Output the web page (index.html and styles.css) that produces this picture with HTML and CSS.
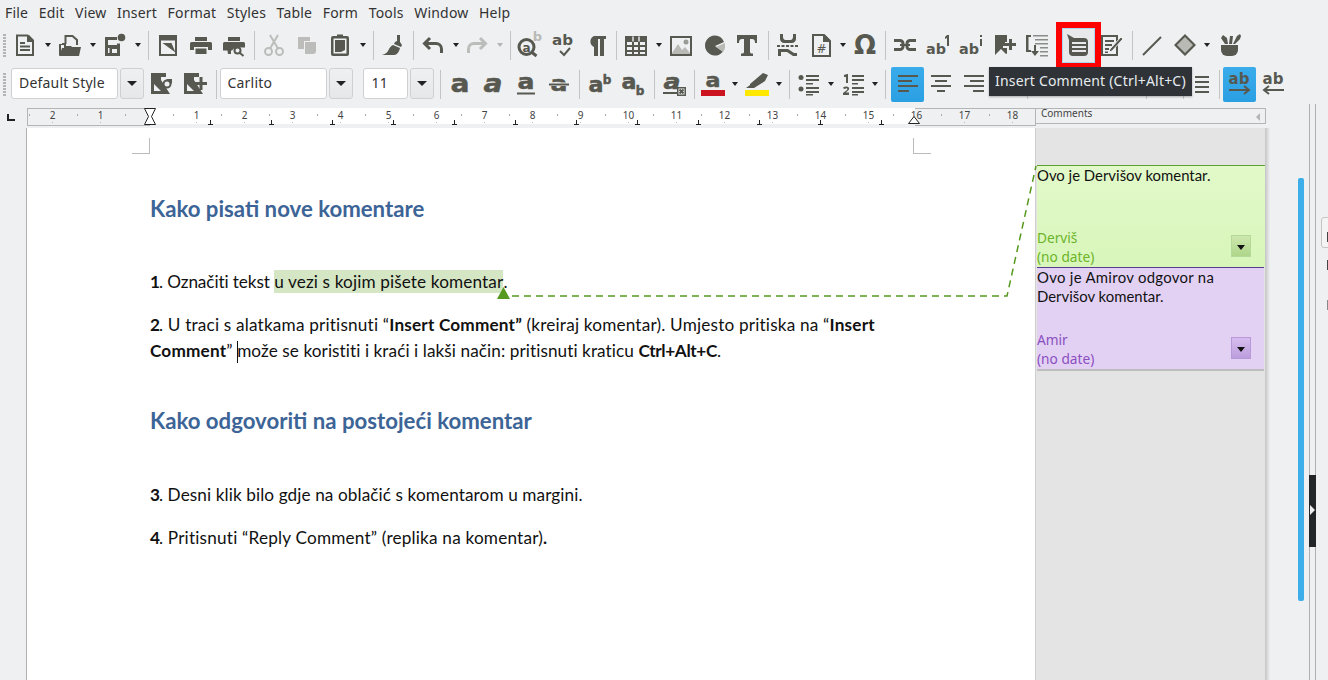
FILE: index.html
```html
<!DOCTYPE html>
<html lang="hr">
<head>
<meta charset="utf-8">
<title>Insert Comment</title>
<link rel="stylesheet" href="styles.css">
</head>
<body>
<div class="app">
  <nav class="menubar">
    <span>File</span><span>Edit</span><span>View</span><span>Insert</span><span>Format</span><span>Styles</span><span>Table</span><span>Form</span><span>Tools</span><span>Window</span><span>Help</span>
  </nav>

  <div class="toolbar tb1">
    <i class="grip"></i>
    <b class="b"><svg viewBox="0 0 24 24"><path class="st" d="M4 2.500h10.500l5.500 5.500V22H4z"/><path d="M14 2h2l5 5v2h-7zM7 9h5v2H7zM7 12.500h10v2H7zM7 16h10v2H7z"/></svg></b><b class="d"></b>
    <b class="b"><svg viewBox="0 0 24 24"><path d="M1 11h3v-1h4v3h5l1 1h9l-2 9H2a1 1 0 0 1-1-1zM3 12v6l1-3h2v-3z"/><path class="st" d="M7.500 11V3h7l4.500 4v5"/></svg></b><b class="d"></b>
    <b class="b"><svg viewBox="0 0 24 24"><path d="M2 4h12v3H5v5h9v-1.500h3V23H2zM5 15v5h1.500v-5zM9 16v4h5v-4z"/><circle cx="18.500" cy="4.500" r="3.800"/></svg></b><b class="d"></b>
    <i class="s"></i>
    <b class="b"><svg viewBox="0 0 24 24"><path class="st" d="M4 3h16v19H4z"/><path d="M3 3h18v4.500H3zM6.500 10h9l4 9.500z"/><path class="wh" d="M8 12l8 8H8z"/></svg></b>
    <b class="b"><svg viewBox="0 0 24 24"><path d="M6 4h12v4H6zM2.500 9h19a1.500 1.500 0 0 1 1.500 1.500V17h-4v-3H5v3H1v-6.500A1.500 1.500 0 0 1 2.500 9zM6.500 15.500h11V21h-11z"/></svg></b>
    <b class="b"><svg viewBox="0 0 24 24"><path d="M6 4h12v4H6zM2.500 9h19a1.500 1.500 0 0 1 1.500 1.500v4h-8a6 6 0 0 0-5 3H1v-7A1.500 1.500 0 0 1 2.500 9z"/><path d="M5 15h4v6H6z"/><circle class="st" cx="15.500" cy="17.500" r="3"/><path class="st" d="M18 20l3.500 3"/></svg></b>
    <i class="s"></i>
    <b class="b off"><svg viewBox="0 0 24 24"><circle class="st" cx="6.500" cy="18.500" r="3.500"/><circle class="st" cx="17.500" cy="18.500" r="3.500"/><path class="st" d="M8 15.500L16 2M16 15.500L8 2"/></svg></b>
    <b class="b off"><svg viewBox="0 0 24 24"><path d="M3 4h12v4H9v8H3z"/><path d="M10 9h11v9a3 3 0 0 1-3 3h-8z"/></svg></b>
    <b class="b"><svg viewBox="0 0 24 24"><path d="M5 3h4V1.500h6V3h4a2 2 0 0 1 2 2v16a2 2 0 0 1-2 2H5a2 2 0 0 1-2-2V5a2 2 0 0 1 2-2zM5.500 5.500v15h13v-15z"/><path d="M7 7h10v10l-4 2H7z"/></svg></b><b class="d"></b>
    <i class="s"></i>
    <b class="b"><svg viewBox="0 0 24 24"><path d="M16 2h3v7l2 3-1 2-7-3 1-2 2-1z"/><path d="M12 12l7 3c-1 4-3 7-6 7H1c4-1 6-3 7-6 1-2 2-3 4-4z"/></svg></b>
    <i class="s"></i>
    <b class="b"><svg viewBox="0 0 24 24"><path class="st3" d="M9 5L3.500 10.500 9 16M4 10.500h11a5.500 5.500 0 0 1 5.500 5.500v4"/></svg></b><b class="d"></b>
    <b class="b off n1"><svg viewBox="0 0 24 24"><path class="st3" d="M15 5l5.500 5.500L15 16M20 10.500H9A5.500 5.500 0 0 0 3.500 16v4"/></svg></b><b class="d dim"></b>
    <i class="s"></i>
    <b class="b"><svg viewBox="0 0 24 24"><text class="g fade" x="19.500" y="8" font-size="13">b</text><circle class="st3" cx="8.500" cy="14" r="7.500"/><text class="g" x="8.500" y="18.500" font-size="12">a</text><path class="st3" d="M14 19.500l4.500 3.500"/></svg></b>
    <b class="b"><svg viewBox="0 0 24 24"><text class="g t" x="1" y="12" font-size="14" textLength="21" lengthAdjust="spacingAndGlyphs">ab</text><path class="st" d="M9 18l4 4 6-7"/></svg></b>
    <b class="b"><svg viewBox="0 0 24 24"><path d="M10 3h12v3h-2v17h-4V6h-2v17h-4v-9a6 6 0 0 1 0-11z"/></svg></b>
    <i class="s"></i>
    <b class="b"><svg viewBox="0 0 24 24"><path d="M1 3h22v20H1zM3 9v3h5V9zm7 0v3h4V9zm6 0v3h5V9zM3 14v3h5v-3zm7 0v3h4v-3zm6 0v3h5v-3zM3 19v2h5v-2zm7 0v2h4v-2zm6 0v2h5v-2z"/><path class="wh" d="M8.300 3.500h1.400v5h-1.400zM14.300 3.500h1.400v5h-1.400z"/></svg></b><b class="d"></b>
    <b class="b"><svg viewBox="0 0 24 24"><path d="M1 3h22v20H1zM3 5v16h18V5z"/><circle cx="17" cy="9" r="2.500" class="gy2"/><path d="M3 20l6-9 4 6 3-3 5 6v1H3z" class="gy"/></svg></b>
    <b class="b"><svg viewBox="0 0 24 24"><path d="M13 2.500a10 10 0 1 0 8 16L13 13l9-4a10 10 0 0 0-9-6.500z"/><path class="gy" d="M14 14l9-4v5a9 9 0 0 1-2 4z"/></svg></b>
    <b class="b"><svg viewBox="0 0 24 24"><path d="M2 2h20v8h-2c0-3-1-4-3-4h-2v13c0 1 1 1.500 3 1.500V23H6v-2.500c2 0 3-.5 3-1.500V6H7c-2 0-3 1-3 4H2z"/></svg></b>
    <i class="s"></i>
    <b class="b"><svg viewBox="0 0 24 24"><path d="M4 1h3v3c0 1.500 1 3 2.500 3h5c1.500 0 2.500-1.500 2.500-3V1h3v5c0 2-2 4-4 4H8c-2 0-4-2-4-4zM1 12h3v2H1zm4.500 0h3v2h-3zm4.500 0h3v2h-3zm4.500 0h3v2h-3zm4.500 0h3v2h-3zM2 16h10l6 4h3v3h-4l-6-4H5v4H2z"/></svg></b>
    <b class="b"><svg viewBox="0 0 24 24"><path class="st" d="M4 2h11l6 6v15H4z"/><path d="M14 2h2l5 5v2h-7z"/><text class="h" x="12.500" y="20" font-size="12">#</text></svg></b><b class="d"></b>
    <b class="b n1"><svg viewBox="0 0 24 24"><text class="o" x="12" y="21" font-size="26">Ω</text></svg></b>
    <i class="s"></i>
    <b class="b"><svg viewBox="0 0 24 24"><path class="st3" d="M1 7.500h6a3 3 0 0 1 3 3v3a3 3 0 0 1-3 3H1M23 7.500h-6a3 3 0 0 0-3 3v3a3 3 0 0 0 3 3h6"/><path d="M7 11h10v2H7z"/></svg></b>
    <b class="b"><svg viewBox="0 0 24 24"><text class="g t" x="0" y="21" font-size="14" textLength="20" lengthAdjust="spacingAndGlyphs">ab</text><path d="M21 2h2v11h-2V5l-2 1V4z"/></svg></b>
    <b class="b"><svg viewBox="0 0 24 24"><text class="g t" x="0" y="21" font-size="14" textLength="20" lengthAdjust="spacingAndGlyphs">ab</text><path d="M21 2h2v2h-2zM21 6h2v7h-2z"/></svg></b>
    <b class="b"><svg viewBox="0 0 24 24"><path d="M3 2h12v7h-2v4h-2v2h4v5.500l-1 .5-5-5-6 6z"/><path d="M17 6h3v4h4v3h-4v4h-3v-4h-4v-3h4z"/></svg></b>
    <b class="b"><svg viewBox="0 0 24 24"><path d="M1 2h5v2H3.500v13H6v2H1z"/><path class="gy3" d="M8 2h15v1.500H8zM10 6h13v1.500H10zM10 10h13v1.500H10zM15 14h8v1.500h-8zM15 18h8v1.500h-8zM15 22h8v1.500h-8z"/><path d="M9 12h2v6h3l-4 5-4-5h3z"/></svg></b>
    <b class="b hot"><svg viewBox="0 0 24 24"><path d="M1 0l7 4h10a4 4 0 0 1 4 4v10a4 4 0 0 1-4 4H7a4 4 0 0 1-4-4V6z"/><path class="hl" d="M6 8h14v2H6zM6 12h14v2H6zM6 16h14v2H6z"/></svg></b>
    <b class="b"><svg viewBox="0 0 24 24"><path class="st" d="M3 3h15v19H3z"/><path d="M6 7h9v2H6zM6 11h7v2H6zM6 15h4v2H6zM6 18.500h3v1.500H6z"/><path d="M22 4l2 2-11 12-3 1 1-3z" class="pen"/></svg></b>
    <i class="s"></i>
    <b class="b"><svg viewBox="0 0 24 24"><path class="st" d="M3 22L21 4"/></svg></b>
    <b class="b"><svg viewBox="0 0 24 24"><path class="gy" d="M12 3l9 9-9 9-9-9z"/><path d="M12 1l11 11-11 11L1 12zM4 12l8 8 8-8-8-8z"/></svg></b><b class="d"></b>
    <b class="b"><svg viewBox="0 0 24 24"><path d="M3 12h17v5a6 6 0 0 1-6 6H9a6 6 0 0 1-6-6z"/><path d="M3 5l2-3 4 3 1 6H7zM11 11l1-8h3l-1 8zM15 11l4-8 3-2 1 2-1 3-5 5z"/></svg></b>
  </div>

  <div class="toolbar tb2">
    <i class="grip"></i>
    <span class="combo c-style">Default Style</span><span class="arrow"></span>
    <b class="b"><svg viewBox="-2 0 24 24"><path fill-rule="evenodd" d="M0 1h15v4h-5v3l9 14H0zM3 12v7h7z"/><circle class="st" cx="16" cy="12" r="3.500"/><path d="M15 7h6v5z"/></svg></b>
    <b class="b"><svg viewBox="-2 0 24 24"><path fill-rule="evenodd" d="M0 1h15v4h-5v3l9 14H0zM3 12v7h7z"/><path d="M15.500 5h3v5H23v3h-4.500v5h-3v-5H11v-3h4.500z"/></svg></b>
    <i class="s m1"></i>
    <span class="combo c-font">Carlito</span><span class="arrow"></span>
    <span class="combo c-size">11</span><span class="arrow"></span>
    <i class="s m1"></i>
    <b class="b"><svg viewBox="0 0 24 24"><text class="a" x="12" y="20" font-size="25" textLength="19" lengthAdjust="spacingAndGlyphs">a</text></svg></b>
    <b class="b"><svg viewBox="0 0 24 24"><text class="a" x="12" y="20" font-size="25" font-style="italic" textLength="19" lengthAdjust="spacingAndGlyphs">a</text></svg></b>
    <b class="b"><svg viewBox="0 0 24 24"><text class="a" x="12" y="17" font-size="22" textLength="17" lengthAdjust="spacingAndGlyphs">a</text><path d="M3 20.500h18v2H3z"/></svg></b>
    <b class="b"><svg viewBox="0 0 24 24"><text class="a" x="12" y="19" font-size="22" textLength="17" lengthAdjust="spacingAndGlyphs">a</text><path class="bgl" d="M1 10.500h22v3.500H1z"/><path d="M2 11.500h20v2H2z"/></svg></b>
    <i class="s"></i>
    <b class="b"><svg viewBox="0 0 24 24"><text class="a" x="9" y="20" font-size="21" textLength="15" lengthAdjust="spacingAndGlyphs">a</text><text class="a" x="20" y="12" font-size="12">b</text></svg></b>
    <b class="b"><svg viewBox="0 0 24 24"><text class="a" x="9" y="17" font-size="21" textLength="15" lengthAdjust="spacingAndGlyphs">a</text><text class="a" x="20" y="23" font-size="12">b</text></svg></b>
    <i class="s m2"></i>
    <b class="b"><svg viewBox="0 0 24 24"><text class="a" x="10" y="17" font-size="22" font-style="italic" textLength="17" lengthAdjust="spacingAndGlyphs">a</text><path d="M1 20h14v2H1z"/><path d="M15 15h9v9h-9zM16.500 16.500v6h6v-6z"/><path class="st" d="M17.500 17.500l4 4M21.500 17.500l-4 4"/></svg></b>
    <i class="s m5"></i>
    <b class="b"><svg viewBox="0 0 24 24"><text class="a" x="12" y="15" font-size="19" textLength="15" lengthAdjust="spacingAndGlyphs">a</text><path d="M0 18h24v6H0z" class="red"/></svg></b><b class="d"></b>
    <b class="b"><svg viewBox="0 0 24 24"><path d="M5 12L18 1l5 2-3 6-11 7H4l-3 0 4-3z"/><path d="M0 18h24v6H0z" class="yel"/></svg></b><b class="d"></b>
    <i class="s"></i>
    <b class="b"><svg viewBox="0 0 24 24"><circle cx="4" cy="5.500" r="2.500"/><circle cx="4" cy="17" r="2.500"/><path d="M9 3h13v2H9zM9 7h13v2H9zM9 11h7v1.500H9zM9 15h13v2H9zM9 19h13v2H9zM9 22h7v1.500H9z"/></svg></b><b class="d"></b>
    <b class="b"><svg viewBox="0 0 24 24"><path d="M3 3l3-1h1v9H5V5H3zM2 23v-2l4-3c1-1 0-2-1-1.500L3 17l-1-1.500c3-2 7-1 6 2l-3 3h3v2.500z"/><path d="M11 3h12v2H11zM11 7h12v2H11zM11 11h6v1.500h-6zM11 15h12v2H11zM11 19h12v2H11zM11 22h6v1.500h-6z"/></svg></b><b class="d"></b>
    <i class="s m3"></i>
    <b class="b on"><svg viewBox="0 0 24 24"><path d="M2 3h20v2H2zM2 8h14v2H2zM2 13h20v2H2zM2 18h11v2H2z"/></svg></b>
    <b class="b"><svg viewBox="0 0 24 24"><path d="M2 3h20v2H2zM6 8h12v2H6zM2 13h20v2H2zM8 18h8v2H8z"/></svg></b>
    <b class="b"><svg viewBox="0 0 24 24"><path d="M2 3h20v2H2zM8 8h14v2H8zM2 13h20v2H2zM11 18h11v2H11z"/></svg></b>
    <b class="b"><svg viewBox="0 0 24 24"><path d="M2 3h20v2H2zM2 8h20v2H2zM2 13h20v2H2zM2 18h20v2H2z"/></svg></b>
    <i class="s"></i>
    <b class="b"></b><b class="b"></b><b class="b"></b>
    <i class="s m4"></i>
    <b class="b"></b>
    <i class="s m6"></i>
    <b class="b"><svg viewBox="0 0 24 24"><path d="M4 4h14v2H4zM4 9h14v2H4zM4 14h14v2H4zM4 19h14v2H4z"/></svg></b>
    <i class="s m7"></i>
    <b class="b on"><svg viewBox="0 0 24 24"><text class="g" x="11" y="12" font-size="15">ab</text><path class="st" d="M1 18h19M16 14l5 4-5 4"/></svg></b>
    <b class="b"><svg viewBox="0 0 24 24"><text class="g" x="12" y="12" font-size="15">ab</text><path class="st" d="M23 18H4M8 14l-5 4 5 4"/></svg></b>
  </div>

  <div class="rulerbar">
    <span class="corner"></span>
    <div class="ruler">
      <span class="rcell">2</span><span class="rcell">1</span><span class="rcell"></span><span class="rcell">1</span><span class="rcell">2</span><span class="rcell">3</span><span class="rcell">4</span><span class="rcell">5</span><span class="rcell">6</span><span class="rcell">7</span><span class="rcell">8</span><span class="rcell">9</span><span class="rcell">10</span><span class="rcell">11</span><span class="rcell">12</span><span class="rcell">13</span><span class="rcell">14</span><span class="rcell">15</span><span class="rcell">16</span><span class="rcell">17</span><span class="rcell">18</span>
      <span class="tabs"></span>
      <svg class="hourglass" viewBox="0 0 12 17"><path d="M.5.500h11L7.500 8.500l4 8H.5l4-8z"/></svg>
      <svg class="rindent" viewBox="0 0 12 8"><path d="M.5 7.500L6 .5l5.500 7z"/></svg>
    </div>
    <div class="rcomments"><span>Comments</span><i class="rtri"></i></div>
  </div>

  <main class="workspace">
    <section class="page">
      <span class="crop crop-l"></span><span class="crop crop-r"></span>
      <h2>Kako pisati nove komentare</h2>
      <p class="p1"><strong>1</strong>. Označiti tekst <span class="mark">u vezi s kojim pišete komentar</span>.</p>
      <p class="p2"><strong>2</strong>. U traci s alatkama pritisnuti “<strong>Insert Comment”</strong> (kreiraj komentar). Umjesto pritiska na “<strong>Insert<br>Comment</strong>” <span class="line2"><i class="caret"></i>može se koristiti i kraći i lakši način: pritisnuti kraticu <strong class="keys">Ctrl+Alt+C</strong>.</span></p>
      <h2 class="h2b">Kako odgovoriti na postojeći komentar</h2>
      <p class="p3"><strong>3</strong>. Desni klik bilo gdje na oblačić s komentarom u margini.</p>
      <p class="p4"><strong>4</strong>. Pritisnuti “Reply Comment” (replika na komentar)<strong>.</strong></p>
    </section>
    <aside class="comments">
      <article class="note green">
        <div class="ntext">Ovo je Dervišov komentar.</div>
        <div class="nfoot"><div class="nmeta">Derviš<br>(no date)</div><span class="nbtn"></span></div>
      </article>
      <article class="note purple">
        <div class="ntext"><span class="wide">Ovo je Amirov odgovor na</span><br>Dervišov komentar.</div>
        <div class="nfoot"><div class="nmeta">Amir<br>(no date)</div><span class="nbtn"></span></div>
      </article>
    </aside>
    <div class="shadow"></div>
    <div class="scroll"><span class="thumb"></span></div>
    <div class="deck"><span class="handle"></span></div>
    <div class="sidepanel"><span class="peek"></span><span class="peek2"></span><span class="peek3"></span><span class="peek4"></span></div>
    <svg class="anchor" viewBox="0 0 1328 552" aria-hidden="true">
      <path class="dash" d="M512 168H1007L1036 38"/>
      <path class="tri" d="M497 171l6.500-12 6.500 12z"/>
    </svg>
  </main>

  <div class="tooltip">Insert Comment (Ctrl+Alt+C)</div>
</div>
</body>
</html>
```

FILE: styles.css
```css
* { box-sizing: border-box; }
html, body { margin: 0; height: 100%; overflow: hidden; }
body { background: #eff0f2; font-family: "Noto Sans", sans-serif; color: #2f3337; }
.app { position: relative; width: 1328px; height: 680px; overflow: hidden; display: flex; flex-direction: column; }

.menubar { display: flex; height: 25px; padding-left: 5px; gap: 10.500px; font-size: 14px; letter-spacing: .2px; line-height: 25px; color: #333; }

.toolbar { display: flex; align-items: center; }
.tb1 { height: 40px; }
.tb2 { height: 38px; }
.grip { width: 3px; height: 23px; margin: 0 3px 0 3px; background: repeating-linear-gradient(#b5b5b5 0 2px, transparent 2px 3px); flex: none; }
.tb1 .grip { margin-right: 2.500px; }
.tb2 .grip { margin-right: 5px; }

.b { flex: none; width: 33px; height: 36px; display: flex; align-items: center; justify-content: center; color: #575850; font-weight: 400; }
.b svg { width: 24px; height: 24px; fill: currentColor; display: block; overflow: visible; }
.off { color: #bcbdba; }
.n1 { margin-left: -1px; }
.d { flex: none; width: 12px; height: 36px; display: flex; align-items: center; justify-content: center; }
.tb2 .d { width: 11px; }
.d::after { content: ""; border: 3.500px solid transparent; border-top: 4px solid #222; border-bottom: 0; }
.dim::after { border-top-color: #b5b5b5; }
.s { flex: none; width: 6px; height: 29px; margin-left: 1.500px; display: flex; justify-content: center; }
.s::after { content: ""; width: 1px; background: #c3c4c4; }
.m1 { margin-left: 3.500px; }
.m2 { margin-left: 2.500px; }
.m3 { margin-left: 2.500px; margin-right: 2.500px; }
.m4 { margin-left: 13.500px; }
.m5 { margin-right: -1px; }
.m6 { margin-left: -2px; }
.m7 { margin-left: -3px; margin-right: 1px; }

.st { fill: none; stroke: currentColor; stroke-width: 2; }
.st3 { fill: none; stroke: currentColor; stroke-width: 3; }
.wh { fill: #eff0f2; }
.gy { fill: #b9bab6; }
.gy2 { fill: #9a9b96; }
.gy3 { fill: #8b8c87; }
.hl { fill: #e8e9eb; }
.bgl { fill: #eff0f2; }
.pen { stroke: #eff0f2; stroke-width: 1; }
.red { fill: #cc1420; }
.yel { fill: #ffe800; }
.g { font-family: "DejaVu Sans", sans-serif; font-weight: 700; text-anchor: middle; fill: currentColor; }
.g.t { text-anchor: start; }
.g.fade { fill: #b9bab6; }
.a { font-family: "DejaVu Sans", sans-serif; font-weight: 700; text-anchor: middle; fill: currentColor; stroke: currentColor; stroke-width: .5; }
.h { font-family: "DejaVu Sans", sans-serif; text-anchor: middle; fill: currentColor; }
.o { font-family: "DejaVu Sans", sans-serif; font-weight: 700; text-anchor: middle; fill: currentColor; }

.combo { flex: none; height: 31px; margin-bottom: 1px; background: #fff; border: 1px solid #cfd0d1; border-radius: 3px; font-size: 14px; letter-spacing: .2px; line-height: 28px; padding-left: 7px; color: #333; }
.c-style { width: 107px; }
.c-font { width: 107px; }
.c-size { width: 45px; padding-left: 8px; margin-left: 10px; }
.arrow { flex: none; width: 24px; height: 31px; margin: 0 0 1px 2px; background: linear-gradient(#eff0f2, #e6e7e9); border: 1px solid #cfd0d1; border-radius: 3px; display: flex; align-items: center; justify-content: center; }
.arrow::after { content: ""; border: 5px solid transparent; border-top: 5px solid #222; border-bottom: 0; }
.on { background: linear-gradient(#3aaceb, #2a9fe2); border-radius: 2px; height: 35px; }

.rulerbar { display: flex; height: 20px; margin-top: 5px; flex: none; }
.corner { flex: none; width: 27px; position: relative; }
.corner::after { content: ""; position: absolute; left: 7px; top: 6px; width: 6px; height: 5px; border-left: 2px solid #222; border-bottom: 2px solid #222; }
.ruler { position: relative; flex: none; width: 1008px; height: 16px; display: flex; padding-left: 1.500px;
  background: linear-gradient(to right, #eff0f2 0 122px, #fff 122px 888px, #eff0f2 888px); }
.ruler::before { content: ""; position: absolute; left: 0; top: 0; width: 122px; height: 16px; border: 1px solid #b5b5b5; border-right: 0; }
.ruler::after { content: ""; position: absolute; left: 888px; top: 0; width: 120px; height: 16px; border: 1px solid #b5b5b5; border-left: 0; }
.rcell { flex: none; width: 48px; height: 16px; text-align: center; font-size: 10px; line-height: 15px; color: #444;
  background: linear-gradient(#aaa, #aaa) 0 6px / 1px 2px no-repeat, linear-gradient(#bbb, #bbb) 50% 14px / 1px 1px no-repeat; }
.tabs { position: absolute; left: 181px; top: 12px; width: 710px; height: 5px;
  background: linear-gradient(to right, transparent 2px, #222 2px 3px, transparent 3px) 0 0 / 61px 4px repeat-x,
              linear-gradient(to right, #222 5px, transparent 5px) 0 4px / 61px 1px repeat-x; }
.hourglass { position: absolute; left: 117px; top: 0; width: 12px; height: 17px; fill: #fff; stroke: #222; stroke-width: 1; }
.rindent { position: absolute; left: 881px; top: 8px; width: 12px; height: 8px; fill: #fff; stroke: #222; stroke-width: 1; }
.rcomments { position: relative; flex: none; width: 231px; height: 16px; border: 1px solid #b5b5b5; padding-left: 5px; font-size: 10px; line-height: 8px; color: #444; }
.rtri { position: absolute; right: 5px; top: 4px; border: 4px solid transparent; border-left: 0; border-right: 4px solid #b5b5b5; }

.workspace { position: relative; flex: 1; display: flex; padding-left: 26px; min-height: 0; }
.page { position: relative; flex: none; width: 1009px; background: #fff; border-left: 1px solid #b0b0b0; padding: 66px 0 0 123px; color: #111;
  font-family: Lato, sans-serif; font-size: 17.200px; line-height: 26px; }
.page h2 { margin: 0; font-size: 22.200px; line-height: 30px; font-weight: 700; color: #3c6496; }
.page p { margin: 0; }
.page p > strong:first-child { letter-spacing: -1px; }
.page .p1 { margin-top: 45px; letter-spacing: -.1px; }
.page .p2 { margin-top: 17px; letter-spacing: .18px; }
.page .h2b { margin-top: 42px; }
.page .p3 { margin-top: 46px; letter-spacing: .09px; }
.page .p4 { margin-top: 17px; letter-spacing: .19px; }
.mark { background: #d5e6c5; display: inline-block; line-height: 23px; height: 23px; vertical-align: baseline; letter-spacing: .12px; }
.line2 { letter-spacing: .07px; }
.keys { letter-spacing: -.35px; }
.caret { display: inline-block; width: 1px; height: 22px; margin-right: -1px; background: #111; vertical-align: -6px; }
.crop { position: absolute; top: 10px; width: 18px; height: 16px; border-bottom: 1px solid #bbb; }
.crop-l { left: 105px; border-right: 1px solid #bbb; }
.crop-r { left: 886px; border-left: 1px solid #bbb; }

.comments { flex: none; width: 230px; background: #e4e4e4; border-left: 1px solid #cfcfcf; padding: 37px 0 0 1px; font-family: Lato, sans-serif; font-size: 14.900px; line-height: 19px; color: #111; }
.wide { letter-spacing: .3px; }
.note { height: 102px; display: flex; flex-direction: column; justify-content: space-between; }
.green { background: linear-gradient(#e2f9c9, #d8f6ba); border-top: 1px solid #5f9e2f; }
.purple { background: #e3d1f4; border-top: 1px solid #5a3b92; box-shadow: 0 2px 0 0 #bdbdbd; margin-right: 1px; }
.nfoot { display: flex; justify-content: space-between; align-items: flex-end; padding: 0 14px 0 0; font-family: "Noto Sans", sans-serif; font-size: 13.700px; }
.purple .nfoot { padding-right: 13px; }
.nmeta { line-height: 19px; height: 38px; margin-bottom: 1px; }
.green .nmeta { color: #6cb42a; }
.purple .nmeta { color: #8a4fc0; }
.nbtn { width: 20px; height: 22px; margin-bottom: 10px; display: flex; align-items: center; justify-content: center; }
.green .nbtn { background: linear-gradient(#cde8ae, #aed68a); border: 1px solid #b5d99a; }
.purple .nbtn { background: linear-gradient(#d6bdee, #bc9ddc); border: 1px solid #b898d8; }
.nbtn::after { content: ""; border: 4px solid transparent; border-top: 5px solid #111; border-bottom: 0; margin-top: 3px; }

.shadow { flex: none; width: 5px; background: linear-gradient(to right, #c4c4c4, #eff0f2); }
.scroll { flex: none; width: 39px; padding: 50px 0 0 28px; }
.thumb { display: block; width: 6px; height: 423px; background: #3daee9; border-radius: 2px; }
.deck { position: relative; flex: none; width: 7px; margin-top: -24px; border-left: 1px solid #b0b0b0; border-right: 1px solid #b0b0b0; }
.handle { position: absolute; left: -1px; top: 371px; width: 7px; height: 72px; background: #232629; }
.handle::after { content: ""; position: absolute; left: 1px; top: 30px; border: 5px solid transparent; border-left: 5px solid #eee; border-right: 0; }
.sidepanel { position: relative; flex: 1; margin-top: -24px; background: #eff0f2; }
.peek { position: absolute; left: 5px; top: 113px; width: 30px; height: 31px; border: 1px solid #c5c5c5; border-radius: 3px; background: #f4f4f5; }
.peek2 { position: absolute; left: 11px; top: 128px; width: 2px; height: 10px; background: #444; }
.peek3 { position: absolute; left: 11px; top: 156px; width: 2px; height: 10px; background: #444; }
.peek4 { position: absolute; left: 11px; top: 196px; width: 2px; height: 10px; background: #888; }
.anchor { position: absolute; left: 0; top: 0; width: 1328px; height: 552px; pointer-events: none; }
.dash { fill: none; stroke: #56991f; stroke-width: 1.500; stroke-dasharray: 7 5; }
.tri { fill: #56991f; }

.tooltip { position: absolute; left: 989px; top: 67px; width: 203px; height: 29px; background: #2f3337; color: #e6ecef; font-size: 14px; letter-spacing: .2px; line-height: 28px; padding-left: 6px; white-space: nowrap; box-shadow: 0 1px 2px rgba(0,0,0,.3); }
.hot { margin-left: 8px; margin-top: 1px; height: 35px; background: #e8e9eb; border: 1px solid #a8d8ef; outline: 6px solid #f00; }
```
